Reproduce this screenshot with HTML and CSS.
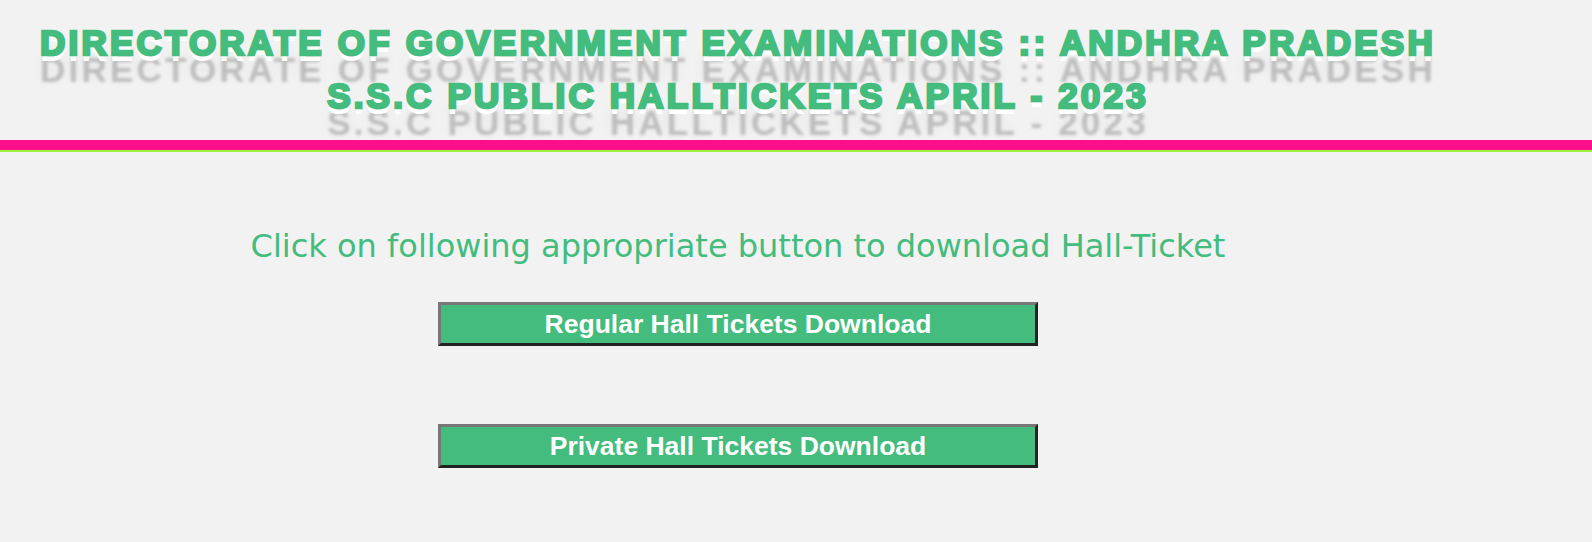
FILE: index.html
```html
<!DOCTYPE html>
<html>
<head>
<meta charset="utf-8">
<link rel="stylesheet" href="styles.css">
</head>
<body>
<header class="header">
  <h1 class="title">DIRECTORATE OF GOVERNMENT EXAMINATIONS :: ANDHRA PRADESH<br>S.S.C PUBLIC HALLTICKETS APRIL - 2023</h1>
</header>
<div class="bar"></div>
<main class="main">
  <p class="intro">Click on following appropriate button to download Hall-Ticket</p>
  <div class="buttons">
    <button class="btn">Regular Hall Tickets Download</button>
    <button class="btn">Private Hall Tickets Download</button>
  </div>
</main>
</body>
</html>
```
FILE: styles.css
```css
html, body {
  margin: 0;
  padding: 0;
  background: #f2f2f2;
}
.header {
  height: 140px;
  box-sizing: border-box;
  padding-top: 16px;
  width: 1476px;
}
.title {
  margin: 0;
  text-align: center;
  font-family: "Liberation Sans", Arial, sans-serif;
  font-weight: 700;
  font-size: 35px;
  line-height: 53px;
  letter-spacing: 3.2px;
  color: #43bc7e;
  -webkit-text-stroke: 2.6px #43bc7e;
  text-shadow: 0 6px 0 #ffffff, 0 27px 3px rgba(0, 0, 0, 0.2), 0 24px 14px rgba(0, 0, 0, 0.06);
}
.bar {
  height: 10px;
  background: #ff0f8a;
  border-bottom: 2px solid #99f23a;
}
.main {
  width: 1476px;
  display: flex;
  flex-direction: column;
  align-items: center;
}
.intro {
  margin: 75px 0 0 0;
  font-family: "DejaVu Sans", Verdana, sans-serif;
  font-size: 32px;
  line-height: 38px;
  color: #43bc7e;
}
.buttons {
  display: flex;
  flex-direction: column;
  align-items: center;
  gap: 78px;
  margin-top: 37px;
}
.btn {
  width: 600px;
  height: 44px;
  background: #43bc7e;
  border: 3px solid;
  border-color: #777777 #222222 #222222 #777777;
  color: #ffffff;
  font-family: "Liberation Sans", Arial, sans-serif;
  font-weight: 700;
  font-size: 26.5px;
  padding: 0;
}
```
